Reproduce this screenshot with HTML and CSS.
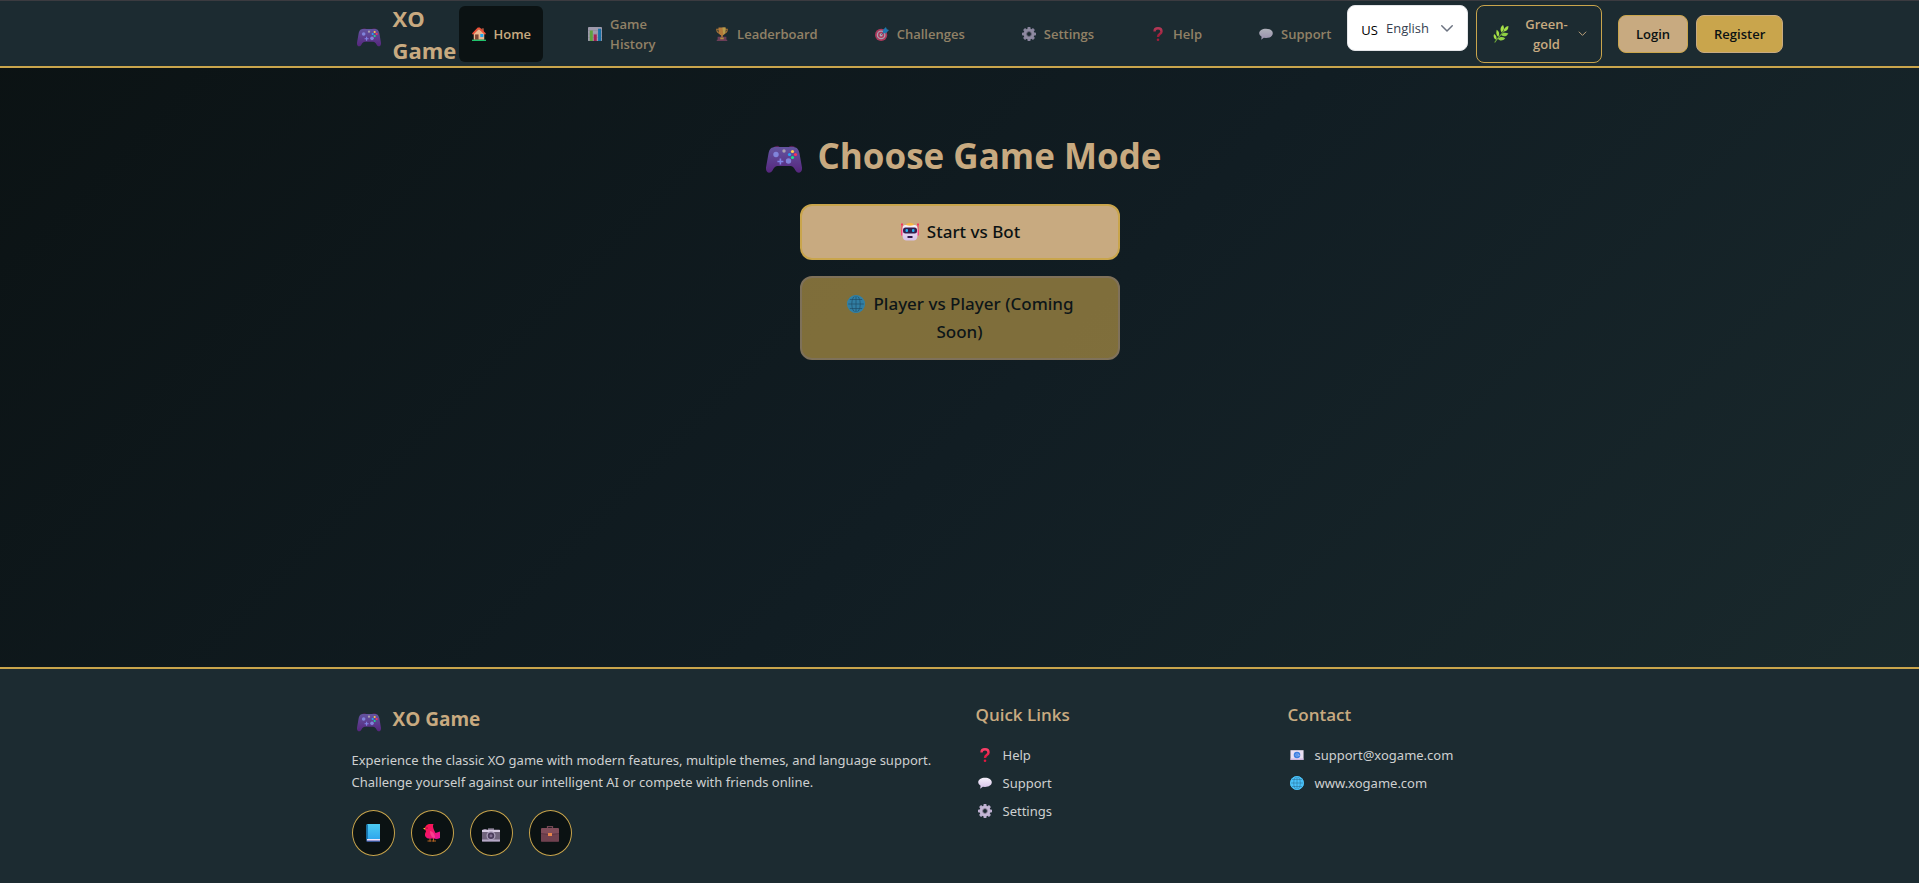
FILE: index.html
```html
<!DOCTYPE html>
<html lang="en">
<head>
<meta charset="utf-8">
<meta name="viewport" content="width=device-width, initial-scale=1">
<title>XO Game</title>
<link rel="stylesheet" href="styles.css">
</head>
<body>
<svg class="sprite" aria-hidden="true">
  <defs>
    <linearGradient id="pad" x1="0" y1="0" x2="0" y2="1"><stop offset="0" stop-color="#6354a0"/><stop offset="1" stop-color="#56267d"/></linearGradient>
    <linearGradient id="book" x1="0" y1="0" x2="0" y2="1"><stop offset="0" stop-color="#4ccbf2"/><stop offset="1" stop-color="#2ba1ec"/></linearGradient>
    <linearGradient id="pale" x1="0" y1="0" x2="0" y2="1"><stop offset="0" stop-color="#f6f1fb"/><stop offset="1" stop-color="#d5c0e8"/></linearGradient>
    <linearGradient id="red" x1="0" y1="0" x2="0" y2="1"><stop offset="0" stop-color="#fa3f68"/><stop offset="1" stop-color="#dc1238"/></linearGradient>
    <linearGradient id="bird" x1="0" y1="0" x2="1" y2="1"><stop offset="0" stop-color="#ff1640"/><stop offset="1" stop-color="#e312a0"/></linearGradient>
    <symbol id="i-pad" viewBox="0 0 36 28">
      <path d="M7 2.500Q12 -1 14 2.500zM22 2.500Q25 -1 30 2.500z" fill="#551f55"/>
      <path d="M10 2H26C31 2 32.500 4 33.500 8.500L36 22.500C36.600 28 32 29.500 29.500 25.500C27.500 22 26.500 21 24 21H12C9.500 21 8.500 22 6.500 25.500C4 29.500-.6 28 0 22.500L2.500 8.500C3.500 4 5 2 10 2z" fill="url(#pad)"/>
      <circle cx="10" cy="9.500" r="2.700" fill="#8084db"/><circle cx="22.500" cy="16" r="2.700" fill="#8084db"/>
      <path d="M14.400 13.500v6M11.400 16.500h6" stroke="#8084e6" stroke-width="1.600"/>
      <circle cx="18" cy="6" r="1.700" fill="#aaa0b0"/>
      <circle cx="26.500" cy="6.500" r="1.600" fill="#ffc84a"/><circle cx="29.500" cy="9.500" r="1.600" fill="#f8315d"/><circle cx="26.500" cy="12.500" r="1.600" fill="#1ddb90"/><circle cx="23.500" cy="9.500" r="1.600" fill="#25a5f5"/>
    </symbol>
    <symbol id="i-home" viewBox="0 0 32 32">
      <path d="M22 3h5v8h-5z" fill="#a8523c"/><path d="M4 15L16 4l12 11v14H4z" fill="#edb78f"/>
      <path d="M7 17h8v12H7z" fill="#7d4533"/><path d="M19 16h7v7h-7z" fill="#1fa5ee"/>
      <path d="M2.500 15L14 3h3l12.500 12" fill="none" stroke="#ef5138" stroke-width="4" stroke-linecap="round"/><path d="M0 29h32v3H0z" fill="#20c36d"/>
    </symbol>
    <symbol id="i-chart" viewBox="0 0 32 32">
      <rect width="32" height="32" rx="1" fill="#dccfe6"/><path d="M0 8h32M0 16h32M0 24h32" stroke="#b9afc4"/>
      <path d="M4 8h7v24H4z" fill="#80da45"/><path d="M13 17h7v15h-7z" fill="#e51d62"/><path d="M23 4h7v28h-7z" fill="#1690dc"/>
    </symbol>
    <symbol id="i-cup" viewBox="0 0 32 32">
      <path d="M9 5H4c0 7 2 9 8 10M23 5h5c0 7-2 9-8 10" fill="none" stroke="#ed983a" stroke-width="2.500"/>
      <path d="M8 1h16v8c0 6-3 9-6 10v5h-4v-5c-3-1-6-4-6-10z" fill="#fb9f3d"/><path d="M17 1h7v8c0 5-3 7-5 8z" fill="#ffd45a"/>
      <path d="M6 22h20v7h2v3H4v-3h2z" fill="#93486b"/><path d="M12 24h8v4h-8z" fill="#f6ba46"/>
    </symbol>
    <symbol id="i-target" viewBox="0 0 32 32">
      <circle cx="14" cy="18" r="14" fill="#ef3e70"/><circle cx="14" cy="18" r="10" fill="#e8d8ec"/><circle cx="14" cy="18" r="7" fill="#ee3c6f"/><circle cx="14" cy="18" r="3.500" fill="#f6e6f4"/>
      <path d="M14 18L24 8" stroke="#5d649f" stroke-width="2"/><path d="M18 14V7l7-7 2 5 5 2-7 7z" fill="#219be8"/>
    </symbol>
    <symbol id="i-gear" viewBox="0 0 32 32">
      <g fill="#bdafd0"><path id="tooth" d="M13 0h6l1.500 8h-9z"/><use href="#tooth" transform="rotate(45 16 16)"/><use href="#tooth" transform="rotate(90 16 16)"/><use href="#tooth" transform="rotate(135 16 16)"/><use href="#tooth" transform="rotate(180 16 16)"/><use href="#tooth" transform="rotate(225 16 16)"/><use href="#tooth" transform="rotate(270 16 16)"/><use href="#tooth" transform="rotate(315 16 16)"/></g>
      <circle cx="16" cy="16" r="8.500" fill="none" stroke="#c4b7d5" stroke-width="7"/><circle cx="16" cy="16" r="5.500" fill="none" stroke="#82758f" stroke-width="2"/>
    </symbol>
    <symbol id="i-help" viewBox="0 0 32 32">
      <path d="M8 10C8 4 12 3 16 3c5 0 8 2 8 7 0 7-8 5-8 13" fill="none" stroke="url(#red)" stroke-width="5.500"/><circle cx="16" cy="29" r="3" fill="#e01840"/>
    </symbol>
    <symbol id="i-chat" viewBox="0 0 32 32"><path d="M16 4c9 0 15.500 4 15.500 10.500S25 25 16 25l-5-.5L5 29l1-7C2 20 .5 17 .5 14.500.5 8 7 4 16 4z" fill="url(#pale)"/></symbol>
    <symbol id="i-leaf" viewBox="0 0 28 34">
      <path d="M2 33C7 25 14 19 21 10" fill="none" stroke="#6ea83a" stroke-width="2"/>
      <g fill="#a5df46"><path d="M15 14C11 7 14 3 18 0c3 6 2 10-3 14z"/><path d="M19 12c0-6 4-9 9-10 0 7-3 10-9 10z"/><path d="M9 22C4 19 5 13 6 9c5 4 6 8 3 13z"/><path d="M5 28C0 26-1 21 1 17c4 3 6 7 4 11z"/></g>
      <g fill="#8fd044"><path d="M14 19c4-5 8-5 14-3-4 6-8 7-14 3z"/><path d="M8 26c4-4 9-4 14-1-4 5-10 6-14 1z"/></g>
    </symbol>
    <symbol id="i-bot" viewBox="0 0 36 36">
      <path d="M2 1v22M34 1v22" stroke="#f8315f" stroke-width="2"/><path d="M0 3h4M32 3h4" stroke="#f8315f" stroke-width="3"/><path d="M0 14h4v11H0zM32 14h4v11h-4z" fill="#f8447c"/>
      <path d="M9 4h18q6 0 6 7v13q0 10-7 11H10q-7-1-7-11V11q0-7 6-7z" fill="url(#pale)"/><path d="M10 4q1-4 8-4t8 4q-8 3-16 0z" fill="#f9b840"/>
      <rect x="4" y="9" width="28" height="12" rx="5" fill="#321c4c"/><rect x="9" y="12" width="5" height="6" rx="2" fill="#27b4ed"/><rect x="22" y="12" width="5" height="6" rx="2" fill="#27b4ed"/><path d="M13 26h10v4H13z" fill="#321c4c"/>
    </symbol>
    <symbol id="i-globe" viewBox="0 0 32 32">
      <circle cx="16" cy="16" r="15.500" fill="#48c0fa"/><g fill="none" stroke="#2a7199" stroke-width="1.300"><ellipse cx="16" cy="16" rx="7.500" ry="15"/><path d="M16 1v30M1 16h30M4 8h24M4 24h24"/></g><circle cx="16" cy="16" r="15" fill="none" stroke="#4bc5fa" stroke-width="2"/>
    </symbol>
    <symbol id="i-mail" viewBox="0 0 32 32">
      <path d="M1 5h30v22H1z" fill="#eadff3"/><path d="M1 24h30v3H1z" fill="#d1b6e1"/><circle cx="16" cy="16" r="7.500" fill="#3c7ee0"/><circle cx="16" cy="16" r="3" fill="none" stroke="#8fb6f1" stroke-width="1.500"/><path d="M19 13v5q3 1 3-2" fill="none" stroke="#8fb6f1" stroke-width="1.500"/>
    </symbol>
    <symbol id="i-book" viewBox="0 0 36 36"><path d="M5 2q0-2 3-2h24v35H7q-2 0-2-3z" fill="url(#book)"/><path d="M5 1h3v29H5z" fill="#1778b5"/><path d="M6 30h26v4H6z" fill="#eee5fb"/><path d="M5 33h27v2H5z" fill="#5150a8"/></symbol>
    <symbol id="i-bird" viewBox="0 0 36 36">
      <path d="M14 28v7M21 28v7M9 34h8M18 34h8" stroke="#b56522" stroke-width="2"/><path d="M5 7L0 9l5 3z" fill="#f3c13c"/>
      <path d="M4 10C4 3 9 0 14 0h7c-2 4-1 7 1 12l3 6 9-3v13q-7 3-12 1H11C4 28 2 21 6 15z" fill="url(#bird)"/><path d="M14 14c6 1 10 6 10 14-7 0-10-7-10-14z" fill="#ff5b9d" opacity=".6"/><circle cx="8" cy="8" r="1.200" fill="#391130"/>
    </symbol>
    <symbol id="i-camera" viewBox="0 0 36 36">
      <path d="M12 9h12v5H12zM3 10h6v4H3z" fill="#b9acc4"/><rect y="11" width="36" height="24" rx="2" fill="#70647c"/><path d="M0 12h36v4H0z" fill="#d7cce2"/><path d="M0 31h36v4H0z" fill="#b6a8c6"/>
      <circle cx="18" cy="23.500" r="9" fill="#aca0bc"/><circle cx="18" cy="23.500" r="6.500" fill="#4a3c5b"/><circle cx="18" cy="23.500" r="3" fill="#837193"/>
    </symbol>
    <symbol id="i-case" viewBox="0 0 36 36">
      <path d="M13 9V5h10v4" fill="none" stroke="#744754" stroke-width="2.500"/><rect y="8" width="36" height="27" rx="2" fill="#824d5a"/><path d="M0 20h36v15H0z" fill="#70414f"/><path d="M0 19q18 4 36 0" fill="none" stroke="#55303f" stroke-width="1.500"/><path d="M14 18h8v6h-8z" fill="#e8874b"/>
    </symbol>
    <symbol id="i-down" viewBox="0 0 24 24"><path d="M3 8l9 9 9-9" fill="none" stroke="currentColor" stroke-width="2.500" stroke-linecap="round" stroke-linejoin="round"/></symbol>
  </defs>
</svg>

<header class="header">
  <div class="container bar">
    <a class="brand" href="#"><svg class="pad"><use href="#i-pad"/></svg><span>XO Game</span></a>
    <nav class="nav" aria-label="Main">
      <a class="nav-link active" href="#" aria-current="page"><svg class="icon"><use href="#i-home"/></svg>Home</a>
      <a class="nav-link" href="#"><svg class="icon"><use href="#i-chart"/></svg><span class="wrap">Game History</span></a>
      <a class="nav-link" href="#"><svg class="icon"><use href="#i-cup"/></svg>Leaderboard</a>
      <a class="nav-link" href="#"><svg class="icon"><use href="#i-target"/></svg>Challenges</a>
      <a class="nav-link" href="#"><svg class="icon"><use href="#i-gear"/></svg>Settings</a>
      <a class="nav-link" href="#"><svg class="icon"><use href="#i-help"/></svg>Help</a>
      <a class="nav-link" href="#"><svg class="icon"><use href="#i-chat"/></svg>Support</a>
    </nav>
    <div class="actions">
      <label class="language"><span class="flag">US</span>
        <select class="language-select" aria-label="Language"><option>English</option></select>
        <svg class="chevron"><use href="#i-down"/></svg>
      </label>
      <button class="theme" type="button" aria-haspopup="listbox"><svg class="leaf"><use href="#i-leaf"/></svg><span class="theme-name">Green-gold</span><svg class="chevron small"><use href="#i-down"/></svg></button>
      <div class="auth">
        <button class="auth-button login" type="button">Login</button>
        <button class="auth-button register" type="button">Register</button>
      </div>
    </div>
  </div>
</header>

<main class="main">
  <h1 class="title"><svg class="title-pad"><use href="#i-pad"/></svg>Choose Game Mode</h1>
  <div class="modes">
    <button class="mode bot" type="button"><svg class="mode-icon"><use href="#i-bot"/></svg>Start vs Bot</button>
    <button class="mode pvp" type="button" disabled><svg class="mode-icon"><use href="#i-globe"/></svg>Player vs Player (Coming Soon)</button>
  </div>
</main>

<footer class="footer">
  <div class="container columns">
    <section class="about">
      <h2 class="about-title"><svg class="pad"><use href="#i-pad"/></svg>XO Game</h2>
      <p class="about-text">Experience the classic XO game with modern features, multiple themes, and language support. Challenge yourself against our intelligent AI or compete with friends online.</p>
      <div class="social">
        <a class="social-link" href="#" aria-label="Facebook"><svg class="social-icon"><use href="#i-book"/></svg></a>
        <a class="social-link" href="#" aria-label="Twitter"><svg class="social-icon"><use href="#i-bird"/></svg></a>
        <a class="social-link" href="#" aria-label="Instagram"><svg class="social-icon"><use href="#i-camera"/></svg></a>
        <a class="social-link" href="#" aria-label="LinkedIn"><svg class="social-icon"><use href="#i-case"/></svg></a>
      </div>
    </section>
    <section>
      <h3 class="column-title">Quick Links</h3>
      <ul class="list">
        <li><a class="list-link" href="#"><svg class="icon"><use href="#i-help"/></svg>Help</a></li>
        <li><a class="list-link" href="#"><svg class="icon"><use href="#i-chat"/></svg>Support</a></li>
        <li><a class="list-link" href="#"><svg class="icon"><use href="#i-gear"/></svg>Settings</a></li>
      </ul>
    </section>
    <section>
      <h3 class="column-title">Contact</h3>
      <ul class="list">
        <li><a class="list-link" href="#"><svg class="icon"><use href="#i-mail"/></svg>support@xogame.com</a></li>
        <li><a class="list-link" href="#"><svg class="icon"><use href="#i-globe"/></svg>www.xogame.com</a></li>
      </ul>
    </section>
  </div>
</footer>
</body>
</html>
```

FILE: styles.css
```css
:root {
  --panel: #1c2b31;
  --ink: #0b1213;
  --tan: #c8aa80;
  --gold: #c9a54c;
  --text: #ced0d0;
  --heading: "Open Sans", "Noto Sans", sans-serif;
}
* { box-sizing: border-box; }
body {
  margin: 0;
  min-height: 100vh;
  display: flex;
  flex-direction: column;
  overflow-x: hidden;
  border-top: 1px solid #3b3b40;
  background: linear-gradient(135deg, #0b1213 0%, #111d23 50%, #1b2b2e 100%);
  color: var(--text);
  font: 13px/20px "Noto Sans", "Open Sans", sans-serif;
}
a { color: inherit; text-decoration: none; }
button, select { font: inherit; }
h1, h2, h3, p, ul { margin: 0; padding: 0; }
svg { flex: none; }
.sprite { position: absolute; width: 0; height: 0; }
.container { width: 100%; max-width: 1280px; margin: 0 auto; padding: 0 32px; }
.icon { width: 14px; height: 14px; margin: 0 2px; }
.pad { width: 24px; height: 20px; margin: 6px 5px 0; }

.header { background: var(--panel); border-bottom: 2px solid var(--gold); font-family: var(--heading); }
.bar { display: flex; align-items: center; min-height: 65px; }
.brand {
  display: flex; align-items: center; gap: 7px; flex: 0 0 107px;
  color: var(--tan); font-size: 22px; line-height: 32px; font-weight: 700;
}
.nav { display: flex; flex: none; align-items: center; gap: 32px; }
.nav-link {
  display: flex; align-items: center; gap: 6px; padding: 8px 12px 8px 11px;
  border-radius: 6px; color: var(--tan); font-weight: 600; opacity: .68;
}
.nav-link.active { min-height: 56px; background: var(--ink); opacity: 1; }
.wrap { max-width: 48px; }
.actions { display: flex; flex: none; align-items: flex-start; gap: 8px; margin-left: 4px; }
.language {
  display: flex; align-items: center; height: 46px; padding: 0 13px;
  border: 1px solid #e3e5e8; border-radius: 8px; background: #fff; color: #374151;
}
.flag { margin-right: 8px; padding-top: 4px; color: #000; }
.language-select {
  appearance: none; border: 0; padding: 0; width: 54px; background: none;
  color: inherit; font-weight: 500;
}
.chevron { width: 14px; height: 14px; color: #6b7280; }
.chevron.small { width: 9px; height: 9px; color: var(--tan); }
.theme {
  display: flex; align-items: center; justify-content: space-between; width: 126px; min-height: 58px; padding: 8px 14px 8px 16px;
  border: 1px solid var(--gold); border-radius: 8px; background: none; color: var(--tan); font-weight: 600;
}
.theme-name { max-width: 60px; padding-left: 6px; }
.leaf { width: 16px; height: 18px; }
.auth { display: flex; align-self: center; gap: 8px; margin-left: 8px; }
.auth-button { height: 38px; padding: 0 17px; border-radius: 8px; color: var(--ink); font-weight: 600; }
.login { border: 1px solid var(--gold); background: var(--tan); }
.register { border: 1px solid var(--tan); background: var(--gold); }

.main { flex: 1; display: flex; flex-direction: column; align-items: center; padding: 64px 16px; }
.title {
  display: flex; align-items: center; gap: 16px; margin-bottom: 24px; padding-left: 8px;
  color: var(--tan); font-family: var(--heading); font-size: 35px; line-height: 48px; font-weight: 700;
}
.title-pad { width: 36px; height: 28px; margin-top: 6px; }
.modes { display: flex; flex-direction: column; gap: 16px; width: 100%; max-width: 320px; }
.mode {
  padding: 12px 32px; border: 2px solid var(--gold); border-radius: 12px; background: var(--tan);
  color: var(--ink); font-size: 17px; line-height: 28px; font-weight: 500;
}
.pvp { border-color: var(--tan); background: var(--gold); opacity: .6; }
.mode-icon { width: 18px; height: 18px; margin: 0 8px 0 2px; vertical-align: -3px; }

.footer { background: var(--panel); border-top: 2px solid var(--gold); padding: 32px 0 27px; }
.columns { display: grid; grid-template-columns: repeat(4, 1fr); gap: 32px; }
.about { grid-column: span 2; }
.about-title {
  display: flex; align-items: center; gap: 7px; margin-bottom: 12px;
  color: var(--tan); font-family: var(--heading); font-size: 19px; line-height: 36px; font-weight: 700;
}
.about-text { line-height: 22px; }
.social { display: flex; gap: 16px; margin-top: 17px; }
.social-link {
  display: grid; place-items: center; width: 43px; height: 46px;
  border: 1px solid var(--gold); border-radius: 50%; background: var(--ink);
}
.social-icon { width: 18px; height: 18px; }
.column-title {
  margin-bottom: 16px; color: var(--tan); font-family: var(--heading);
  font-size: 17px; line-height: 28px; font-weight: 600;
}
.list { display: grid; gap: 8px; list-style: none; }
.list-link { display: flex; align-items: center; gap: 9px; }
```
